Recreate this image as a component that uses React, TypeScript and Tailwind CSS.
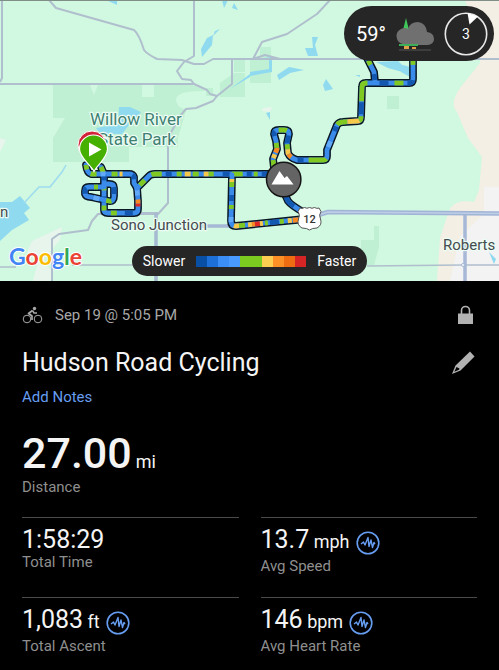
import React from "react";

const BLUE = "#3a8bea";
const LIGHT = "#62aaf8";
const DARK = "#1258b0";
const GREEN = "#80c822";
const YELLOW = "#f8c84a";
const ORANGE = "#f98a22";
const RED = "#e02a22";

// [start, length, color] measured along the path
type Span = [number, number, string];

const legs: { d: string; spans: Span[] }[] = [
  {
    d: "M101 167L104 174V210Q104 213 108 213H134Q138 213 138 209V201L137 188L134 183V177Q133 174 129 174H91Q87 173 86 165",
    spans: [
      [0, 6, GREEN],
      [9, 5, DARK],
      [20, 4, GREEN],
      [30, 6, DARK],
      [39, 5, GREEN],
      [52, 6, GREEN],
      [66, 8, DARK],
      [84, 3, RED],
      [87, 4, ORANGE],
      [95, 8, LIGHT],
      [112, 5, DARK],
      [127, 3, YELLOW],
      [132, 6, GREEN],
      [144, 5, LIGHT],
      [153, 6, GREEN],
      [165, 14, GREEN],
    ],
  },
  {
    d: "M104 187L89 187Q85 187 85 191V194Q86 197 91 197L109 201Q114 202 114 196V188Q114 184 109 184H104",
    spans: [
      [6, 4, GREEN],
      [18, 6, DARK],
      [34, 6, LIGHT],
      [47, 5, GREEN],
      [60, 7, DARK],
    ],
  },
  {
    d: "M137 188L149 176Q151 174 155 174H284",
    spans: [
      [4, 7, GREEN],
      [20, 10, GREEN],
      [34, 6, DARK],
      [45, 5, GREEN],
      [53, 6, YELLOW],
      [61, 6, GREEN],
      [72, 5, YELLOW],
      [77, 5, GREEN],
      [91, 7, DARK],
      [100, 11, GREEN],
      [115, 5, DARK],
      [122, 4, GREEN],
      [130, 7, DARK],
    ],
  },
  {
    d: "M232 175L231 221Q231 226 236 226L305 219",
    spans: [
      [4, 3, YELLOW],
      [7, 5, GREEN],
      [20, 6, DARK],
      [30, 4, GREEN],
      [42, 5, LIGHT],
      [52, 5, YELLOW],
      [57, 6, GREEN],
      [66, 4, YELLOW],
      [70, 3, ORANGE],
      [73, 5, RED],
      [78, 3, YELLOW],
      [83, 3, GREEN],
      [88, 9, DARK],
      [98, 4, GREEN],
      [106, 4, YELLOW],
      [111, 7, ORANGE],
    ],
  },
  {
    d: "M283 190L288 201Q291 205 303 212",
    spans: [[0, 20, DARK]],
  },
  {
    d: "M274 168L273 159L277 149L276 141L274 134Q274 130 279 130H284Q289 130 289 134L287 143L288 153Q290 158 297 160H323Q327 160 327 156V150L337 125Q339 122 343 122L358 121Q361 121 361 117L362 87Q362 83 366 83H409Q413 83 413 79V50",
    spans: [
      [0, 8, GREEN],
      [10, 4, YELLOW],
      [16, 5, ORANGE],
      [21, 5, GREEN],
      [33, 5, DARK],
      [42, 8, GREEN],
      [56, 8, DARK],
      [65, 5, GREEN],
      [70, 5, YELLOW],
      [75, 4, ORANGE],
      [86, 6, DARK],
      [97, 18, GREEN],
      [127, 6, LIGHT],
      [144, 5, DARK],
      [151, 11, GREEN],
      [162, 12, YELLOW],
      [174, 5, GREEN],
      [181, 12, DARK],
      [194, 22, GREEN],
      [228, 9, DARK],
      [243, 9, GREEN],
      [256, 7, DARK],
      [278, 7, GREEN],
      [289, 10, DARK],
    ],
  },
  {
    d: "M375 82L374 72L364 52",
    spans: [
      [2, 6, DARK],
      [18, 5, GREEN],
      [23, 10, DARK],
    ],
  },
];

const scale = [
  "#0a4fa6",
  "#1d70d8",
  "#3b8ef6",
  "#4a9bff",
  "#7ccb20",
  "#7ccb20",
  "#fbcd50",
  "#fb9027",
  "#ee6d12",
  "#d62525",
];

const stats = [
  { label: "Total Time", value: "1:58:29", unit: "", graph: false },
  { label: "Avg Speed", value: "13.7", unit: "mph", graph: true },
  { label: "Total Ascent", value: "1,083", unit: "ft", graph: true },
  { label: "Avg Heart Rate", value: "146", unit: "bpm", graph: true },
];

export default function App() {
  return (
    <div className="min-h-screen bg-black text-[#f4f4f4] font-['Roboto',sans-serif]">
      <header className="relative overflow-hidden">
        <RouteMap />
        <Weather />
        <Legend />
      </header>

      <main className="px-[22px] pt-[22px]">
        <div className="flex h-6 items-center justify-between">
          <div className="flex items-center gap-3 text-[15px] text-[#a8a8a8]">
            <CyclistIcon />
            <time>Sep 19 @ 5:05 PM</time>
          </div>
          <button aria-label="Privacy" className="mr-1">
            <LockIcon />
          </button>
        </div>

        <div className="mt-5 flex items-center justify-between">
          <h1 className="text-[25px] leading-8">Hudson Road Cycling</h1>
          <button aria-label="Edit name">
            <PencilIcon />
          </button>
        </div>
        <button className="mt-2 block text-[15px] leading-5 text-[#669df0]">
          Add Notes
        </button>

        <div className="mt-[22px] flex items-baseline gap-1 leading-[48px]">
          <span className="text-[43px] font-medium">27.00</span>
          <span className="text-lg leading-6">mi</span>
        </div>
        <p className="text-[15px] leading-5 text-[#8f8f8f]">Distance</p>

        <dl className="mt-5 grid grid-cols-2 gap-x-[22px]">
          {stats.map((s) => (
            <div
              key={s.label}
              className="flex h-20 flex-col border-t border-[#4a4a4a] pt-2"
            >
              <dt className="order-2 text-[15px] leading-4 text-[#8f8f8f]">
                {s.label}
              </dt>
              <dd className="flex items-start gap-1.5">
                <span className="text-[25px] leading-7">
                  {s.value}
                  {s.unit && <span className="text-lg leading-6"> {s.unit}</span>}
                </span>
                {s.graph && (
                  <button aria-label={`${s.label} graph`} className="mb-[3px] mt-[5px]">
                    <PulseIcon />
                  </button>
                )}
              </dd>
            </div>
          ))}
        </dl>
      </main>
    </div>
  );
}

function Weather() {
  return (
    <div className="absolute right-[5px] top-1.5 flex h-[55px] w-[150px] items-center justify-between rounded-full bg-[#262626] pl-3 pr-1.5">
      <span className="text-xl text-white">59°</span>
      <svg width="40" height="36" viewBox="0 0 40 36">
        <path d="M11 2L14 14H8Z" fill="#3fc55a" />
        <path
          d="M8 28A8 8 0 0 1 6 13Q10 11 13 13Q15 6 23 6Q31 7 32 16Q39 17 39 23Q39 28 33 29H8Z"
          fill="#707070"
        />
        <path d="M4 28H23V30H4Z" fill="#3fae58" />
        <path d="M9 30H14V33H9ZM17 31H21V33H17Z" fill="#e0a04a" />
        <path d="M4 34H36" stroke="#555" />
      </svg>
      <div className="relative flex size-11 items-center justify-center">
        <svg className="absolute inset-0" width="44" height="44" viewBox="0 0 44 44">
          <circle cx="22" cy="22" r="20.7" fill="none" stroke="#e8e8e8" strokeWidth="1.6" />
          <path d="M23.5 1L34 4.500L25.500 12.500Z" fill="#fff" />
        </svg>
        <span className="text-sm text-white">3</span>
      </div>
    </div>
  );
}

function Legend() {
  return (
    <div className="absolute inset-x-0 bottom-[5px] flex justify-center">
      <div className="flex h-[30px] items-center gap-[11px] rounded-full bg-[#262626] px-[11px] text-sm text-white">
        <span>Slower</span>
        <div className="flex">
          {scale.map((c, i) => (
            <div key={i} className="h-[11px] w-[11px]" style={{ backgroundColor: c }} />
          ))}
        </div>
        <span>Faster</span>
      </div>
    </div>
  );
}

function RouteMap() {
  return (
    <svg className="block w-full" viewBox="0 0 499 281" role="img" aria-label="Ride map">
      <rect width="499" height="281" fill="#d1f8e0" />

      {/* parkland */}
      <g fill="#c0f0d3">
        <path d="M53 85H90L94 95L98 85H142V97H154V85H192Q200 87 205 91Q178 90 176 99Q176 107 186 110L178 138V147H129V162H53V138L65 118H53Z" />
        <path d="M206 88H213V96H206ZM220 83L234 73H245V97H220ZM234 60H245V72H234ZM250 60H271V83H250ZM260 47H271V58H260Z" />
        <path d="M387 96H399V109H387ZM374 226H379V247L374 265H361V240H374Z" />
      </g>
      <g fill="#e7f5ec">
        <path d="M0 138L6 140L0 152ZM32 241L62 227L60 240L50 252L35 262L27 252ZM38 262L54 270L50 281H33ZM263 108L272 107L270 112L262 111Z" />
      </g>

      {/* farmland and town */}
      <path
        d="M465 0L480 40L480 63L460 88Q449 104 457 112L468 138L482 157L479 190L474 202Q452 198 448 214L440 238L437 281H499V0Z"
        fill="#f3efe5"
      />
      <path d="M484 187H499V281H450L460 236L484 214Z" fill="#f3f3f4" />

      {/* water */}
      <g fill="#90daf0">
        <path d="M106 0H117V5ZM222 0H228L224 8ZM234 3L238 10L232 8ZM215 31L220 29L213 36ZM207 38L213 35L212 45L202 57L201 49Z" />
        <path d="M119 107L130 107L141 112L136 120L129 125L122 134H101L96 128L118 124Z" />
        <path d="M305 48H313L312 37H318L315 45L318 56H308ZM277 75L289 67L304 70L290 73L279 80ZM326 79L333 89L325 91L323 85ZM310 89L316 95ZM355 75H360V77ZM376 62L398 61L413 75L388 68ZM403 65L410 67V77L401 72ZM266 113L270 112V120Z" />
        <path d="M250 72L269 69V60L254 59L272 57V72L250 76ZM230 89L250 74V77Z" />
        <path d="M0 202H12L20 196L30 208L24 213L29 220L12 230L0 241Z" />
        <path d="M489 252L496 259L494 264Z" />
      </g>
      <path d="M24 203L39 187L50 187L62 172L66 165" fill="none" stroke="#9ddcf0" strokeWidth="1.500" />

      {/* minor roads */}
      <g fill="none" stroke="#b0bfcd" strokeWidth="2" strokeLinejoin="round">
        <path d="M2 0V78L0 82M0 84H195" />
        <path d="M49 0L56 8L134 30Q139 34 144 50Q147 54 157 59L182 60L194 64H204L213 59H330L499 59" />
        <path d="M194 0V56L184 62L177 71L182 79L191 80L194 84L207 90L210 94L217 96L232 84V60" />
        <path d="M217 96L213 101L196 108L186 109L180 116L168 138V203L158 214H98L92 221L88 230L59 234L52 239V281M138 213H158" />
        <path d="M330 0L317 14L287 34L262 42L253 59L265 55L280 59" />
        <path d="M0 267H16M72 265H150M367 266L462 265H499" strokeWidth="1.500" />
        <path d="M156 213V281" strokeWidth="3.500" stroke="#a6bad2" />
        <path d="M195 226H234M465 214V281" strokeWidth="3.500" stroke="#a6b8d6" />
        <path d="M315 216L328 212L499 213.500" strokeWidth="4.500" stroke="#a1b4d6" />
        <path d="M315 216L328 212L499 213.500" strokeWidth="1.500" stroke="#bdcfe6" />
      </g>
      <circle cx="463" cy="265" r="1.500" fill="#fff" stroke="#a6b8d6" />

      {/* place names */}
      <g stroke="#ecfdf3" strokeWidth="2.500" strokeLinejoin="round" paintOrder="stroke" fontFamily="Roboto, sans-serif">
        <g fill="#3f8073" fontSize="17">
          <text x="90" y="125">Willow River</text>
          <text x="98" y="145">State Park</text>
        </g>
        <g fill="#454b4f" fontSize="15">
          <text x="0" y="217">n</text>
          <text x="111" y="230">Sono Junction</text>
          <text x="443" y="250">Roberts</text>
        </g>
      </g>

      {/* recorded track */}
      <g fill="none" strokeLinejoin="round">
        {legs.map((leg) => (
          <path key={leg.d} d={leg.d} stroke="#0a1826" strokeWidth="7.800" strokeLinecap="round" />
        ))}
        {legs.map((leg) => (
          <g key={leg.d} strokeWidth="4.800">
            <path d={leg.d} stroke={BLUE} strokeLinecap="round" />
            {leg.spans.map(([start, length, color]) => (
              <path
                key={start}
                d={leg.d}
                stroke={color}
                strokeDasharray={`0 ${start} ${length} 999`}
              />
            ))}
          </g>
        ))}
      </g>

      {/* finish pin under the start pin */}
      <circle cx="92" cy="145" r="14" fill="#d02238" stroke="#fff" />
      <path
        d="M94 171.500C91 165 79.500 158 79.500 149A14 14 0 0 1 107.500 149C107.500 158 97 165 94 171.500Z"
        fill="#46b000"
        stroke="#fff"
        strokeWidth="1.200"
      />
      <path d="M89 142.500L101.500 149.500L89 156.500Z" fill="#fff" />

      {/* climb marker */}
      <circle cx="283.700" cy="179.500" r="17.200" fill="#646464" stroke="#151515" strokeWidth="1.500" />
      <path d="M271.500 184.500L279.500 171L284.500 178L287 176L293.500 184.500Z" fill="#fff" />

      {/* US highway shield */}
      <path
        d="M300 208Q302 209 304.500 207.500Q307 209 309.500 207.500Q312 209 314.500 207.500Q317 209 319 208L321 211.500Q318.500 215 320.500 219Q322.500 225 317 228Q312 228 309.500 230Q307 228 302 228Q296.500 225 298.500 219Q300.500 215 298 211.500Z"
        fill="#fff"
        stroke="#555"
        strokeWidth="1"
      />
      <text x="309.500" y="223" fontSize="11" fontWeight="500" textAnchor="middle" fill="#333" fontFamily="Roboto, sans-serif">
        12
      </text>

      <text
        x="9"
        y="265"
        fontSize="23"
        fontWeight="700"
        stroke="#fff"
        strokeWidth="2"
        strokeLinejoin="round"
        paintOrder="stroke"
        fontFamily="Lato, sans-serif"
      >
        <tspan fill="#4285f4">G</tspan>
        <tspan fill="#ea4335">o</tspan>
        <tspan fill="#fbbc05">o</tspan>
        <tspan fill="#4285f4">g</tspan>
        <tspan fill="#34a853">l</tspan>
        <tspan fill="#ea4335">e</tspan>
      </text>

      <rect width="499" height="1" fill="#7f8f88" />
    </svg>
  );
}

function CyclistIcon() {
  return (
    <svg width="21" height="20" viewBox="0 0 21 20" fill="none" stroke="#a8a8a8">
      <circle cx="5" cy="14" r="3.800" />
      <circle cx="16" cy="14" r="3.800" />
      <circle cx="12.500" cy="3.500" r="1.700" fill="#a8a8a8" stroke="none" />
      <path d="M10.500 5.500L6.500 8.500L10 11V15" strokeWidth="1.700" strokeLinejoin="round" />
      <path d="M10.500 5.500L12 8H15" strokeWidth="1.500" />
    </svg>
  );
}

function LockIcon() {
  return (
    <svg width="15" height="20" viewBox="0 0 15 20">
      <path d="M3.500 9V5.500A4 4 0 0 1 11.500 5.500V9" fill="none" stroke="#b2b2b2" strokeWidth="1.600" />
      <path d="M0 8.500H15V19H0Z" fill="#b2b2b2" />
    </svg>
  );
}

function PencilIcon() {
  return (
    <svg width="25" height="24" viewBox="0 0 25 24">
      <path
        d="M18 0.500L22.500 5.500L8.500 19.500L0 23L3.500 14.500ZM4.500 16L2.300 20.700L7 18.800L7.500 17.500Z"
        fill="#b2b2b2"
        fillRule="evenodd"
      />
    </svg>
  );
}

function PulseIcon() {
  return (
    <svg width="24" height="24" viewBox="0 0 24 24" fill="none" stroke="#669df0">
      <circle cx="12" cy="12" r="10.800" strokeWidth="1.600" />
      <path
        d="M5 13L7.500 11L9 14L12 6.500L13 15.500L15 9L16.500 16.500L18 11.500L19 13"
        strokeWidth="1.400"
        strokeLinejoin="round"
      />
    </svg>
  );
}
